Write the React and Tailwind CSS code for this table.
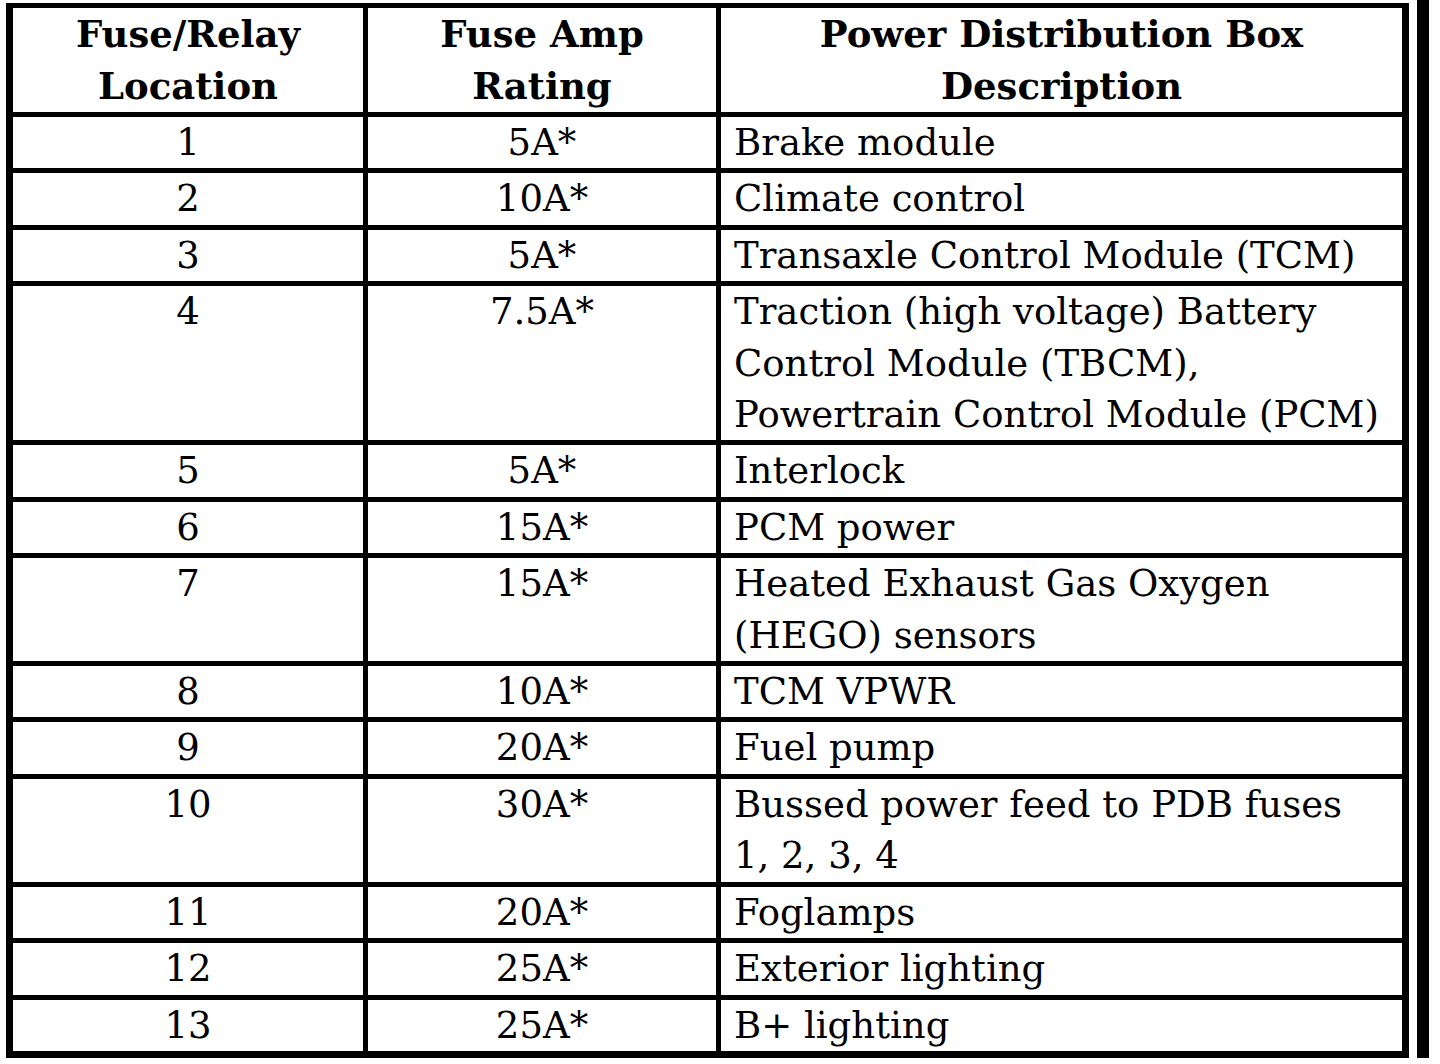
import React from "react";

const rows = [
  ["1", "5A*", ["Brake module"]],
  ["2", "10A*", ["Climate control"]],
  ["3", "5A*", ["Transaxle Control Module (TCM)"]],
  ["4", "7.5A*", ["Traction (high voltage) Battery", "Control Module (TBCM),", "Powertrain Control Module (PCM)"]],
  ["5", "5A*", ["Interlock"]],
  ["6", "15A*", ["PCM power"]],
  ["7", "15A*", ["Heated Exhaust Gas Oxygen", "(HEGO) sensors"]],
  ["8", "10A*", ["TCM VPWR"]],
  ["9", "20A*", ["Fuel pump"]],
  ["10", "30A*", ["Bussed power feed to PDB fuses", "1, 2, 3, 4"]],
  ["11", "20A*", ["Foglamps"]],
  ["12", "25A*", ["Exterior lighting"]],
  ["13", "25A*", ["B+ lighting"]],
];

const Lines = ({ lines }) =>
  lines.map((l, i) => (
    <div key={i} className="whitespace-nowrap">
      {l}
    </div>
  ));

export default function App() {
  return (
    <div className="w-[1440px] h-[1064px] bg-white text-black flex font-['DejaVu_Serif',serif] overflow-hidden">
      <div className="ml-[6px] mt-[3px] self-start bg-black pt-[5px] pl-[7px] pr-[7px] pb-[7px] grid grid-cols-[350px_348px_681px] gap-x-[5px] gap-y-[5px]">
        {/* header */}
        <div className="bg-white text-center font-bold text-[37px] leading-[52px]">
          <div>Fuse/Relay</div>
          <div>Location</div>
        </div>
        <div className="bg-white text-center font-bold text-[37px] leading-[52px]">
          <div>Fuse Amp</div>
          <div>Rating</div>
        </div>
        <div className="bg-white text-center font-bold text-[37px] leading-[52px]">
          <div>Power Distribution Box</div>
          <div>Description</div>
        </div>

        {rows.map(([loc, amp, desc]) => (
          <React.Fragment key={loc}>
            <div className="bg-white text-center text-[37px] leading-[51.4px]">{loc}</div>
            <div className="bg-white text-center text-[37px] leading-[51.4px]">{amp}</div>
            <div className="bg-white pl-[13px] text-[37px] leading-[51.4px]">
              <Lines lines={desc} />
            </div>
          </React.Fragment>
        ))}
      </div>
      <div className="ml-[8px] w-[12px] h-[1058px] bg-black" />
    </div>
  );
}
